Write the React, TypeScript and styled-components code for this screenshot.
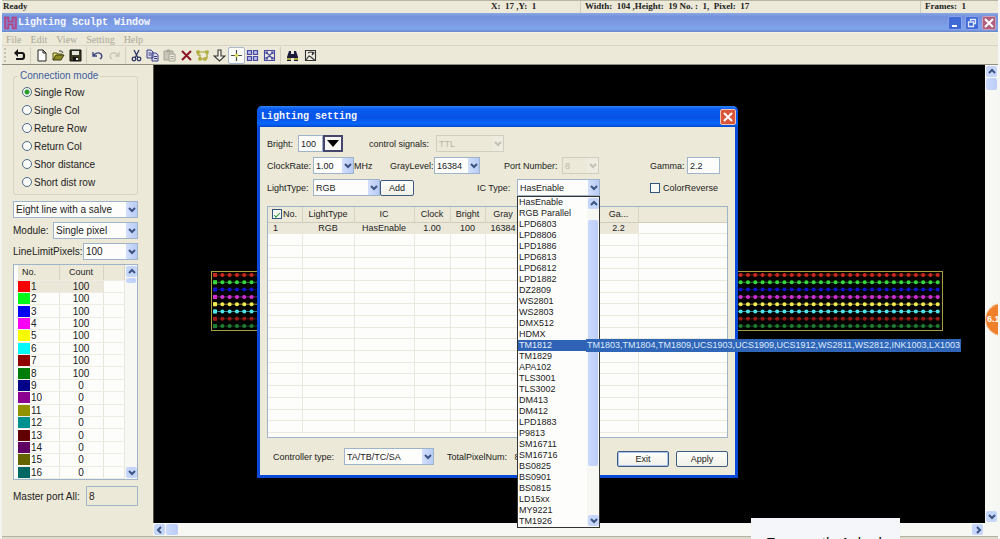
import React from 'react';
import styled, { createGlobalStyle } from 'styled-components';

const sans = '"Liberation Sans", Arial, sans-serif';
const serif = '"Liberation Serif", "Times New Roman", serif';
const mono = '"Liberation Mono", "Courier New", monospace';
const face = '#ece9d8';
const edge = '#9fb4c8';

const GlobalStyle = createGlobalStyle`
  *, *::before, *::after { box-sizing: border-box; }
  html, body, #root { height: 100%; margin: 0; }
  body { background: #f6f6f4; font-family: ${sans}; font-size: 10px; color: #222; overflow: hidden; }
  button, input, select { font: inherit; color: inherit; margin: 0; }
`;

const Window = styled.div`
  position: relative;
  display: flex;
  flex-direction: column;
  height: 100%;
  min-height: 539px;
  margin-right: 2px;
  background: ${face};
  border-left: 2px solid #f4f4f0;
  overflow: hidden;
`;

/* Status strip */
const StatusBar = styled.div`
  display: grid;
  grid-template-columns: 1fr 90px 340px 78px;
  height: 13px;
  line-height: 11px;
  border-top: 1px solid #b9b6a4;
  font-family: ${serif};
  font-size: 9px;
  font-weight: bold;
  white-space: pre;
`;
const StatusCell = styled.span<{ $divided?: boolean }>`
  padding-left: ${p => (p.$divided ? 4 : 1)}px;
  border-left: ${p => (p.$divided ? '1px solid #d0cdbc' : 'none')};
`;

/* Title bars */
const TitleBar = styled.header`
  display: flex;
  align-items: center;
  height: 19px;
  padding: 0 2px;
  background: linear-gradient(#8aa9e4 0, #7490dc 20%, #7b98e2 45%, #7fa5ec 85%, #6a84c8 100%);
`;
const TitleText = styled.h1`
  flex: 1;
  margin: 0;
  font-family: ${mono};
  font-size: 10px;
  font-weight: bold;
  color: #f4f7ff;
`;
const CaptionButton = styled.button<{ $close?: boolean }>`
  display: grid;
  place-items: center;
  width: 14px;
  height: 14px;
  margin-left: 3px;
  padding: 0;
  border: 1px solid ${p => (p.$close ? '#c9a0b8' : '#88a2ea')};
  border-radius: 2px;
  background: ${p => (p.$close ? '#b0607c' : '#3f69d6')};
`;

/* Menu and toolbar */
const MenuBar = styled.nav`
  display: flex;
  gap: 9px;
  height: 14px;
  padding-left: 4px;
  border-top: 1px solid #f6f4ea;
  border-bottom: 1px solid #d8d5c6;
  font-family: ${serif};
  font-size: 10px;
  line-height: 13px;
`;
const MenuLink = styled.a`
  color: #aaa896;
  text-decoration: none;
`;
const Toolbar = styled.div`
  display: flex;
  align-items: center;
  height: 19px;
  padding-left: 2px;
  border-bottom: 1px solid #8f8d80;
`;
const Grip = styled.span`
  width: 6px;
  height: 14px;
  border-left: 2px dotted #c4c1b0;
`;
const ToolGroup = styled.div<{ $width: number }>`
  display: grid;
  grid-auto-flow: column;
  grid-auto-columns: 1fr;
  width: ${p => p.$width}px;
  height: 17px;
  margin-right: 2px;
  padding-right: 2px;
  border-right: 1px solid #d2cfbe;
  &:last-child { border-right: none; }
`;
const ToolButton = styled.button<{ $on?: boolean }>`
  display: grid;
  place-items: center;
  min-width: 0;
  padding: 0;
  border: 1px solid ${p => (p.$on ? '#aab6cc' : 'transparent')};
  border-radius: 2px;
  background: ${p => (p.$on ? '#fcfcfa' : 'transparent')};
`;

/* Workspace */
const Workspace = styled.main`
  display: flex;
  flex: 1;
  min-height: 0;
`;
const SidePanel = styled.aside`
  display: flex;
  flex-direction: column;
  width: 151px;
  padding: 5px 15px 0 11px;
`;
const Group = styled.fieldset`
  margin: 0 0 6px;
  padding: 1px 8px 3px;
  border: 1px solid #d6d4c2;
  border-radius: 3px;
`;
const GroupTitle = styled.legend`
  margin-left: -4px;
  padding: 0 2px;
  line-height: 12px;
  color: #3c5ea0;
`;
const RadioLabel = styled.label`
  display: flex;
  align-items: center;
  gap: 2px;
  height: 18px;
`;
const Radio = styled.input`
  appearance: none;
  width: 10px;
  height: 10px;
  border: 1px solid #4b6a86;
  border-radius: 50%;
  background: #fbfbf9;
  &:checked { background: radial-gradient(circle, #2c9c2c 0 2px, #f4f8f2 3px); }
`;
const SideRow = styled.div`
  display: flex;
  align-items: center;
  justify-content: space-between;
  margin-bottom: 4px;
  white-space: nowrap;
`;

/* Form controls */
const ComboFrame = styled.span<{ $width?: number; $disabled?: boolean }>`
  display: grid;
  align-items: center;
  flex: none;
  width: ${p => (p.$width ? p.$width + 'px' : '100%')};
  height: 17px;
  border: 1px solid ${p => (p.$disabled ? '#d0cebf' : edge)};
  background: ${p => (p.$disabled ? face : '#fdfdfb')};
  color: ${p => (p.$disabled ? '#b9b7a6' : '#222')};
`;
const ComboSelect = styled.select`
  grid-area: 1 / 1;
  appearance: none;
  width: 100%;
  height: 15px;
  padding: 0 0 0 2px;
  border: none;
  background: transparent;
  opacity: 1;
`;
const ArrowBox = styled.span<{ $disabled?: boolean }>`
  grid-area: 1 / 1;
  justify-self: end;
  display: grid;
  place-items: center;
  width: 11px;
  height: 15px;
  background: ${p => (p.$disabled ? '#eeece0' : 'linear-gradient(90deg, #d3dffc, #b8cbf6)')};
  pointer-events: none;
`;
const TextInput = styled.input<{ $width: number }>`
  width: ${p => p.$width}px;
  height: 17px;
  padding: 0 2px;
  border: 1px solid ${edge};
  background: #fdfdfb;
`;
const PortInput = styled(TextInput)`
  height: 20px;
  background: ${face};
  line-height: 16px;
`;
const PushButton = styled.button<{ $width: number; $default?: boolean }>`
  width: ${p => p.$width}px;
  height: 16px;
  padding: 0;
  border: 1px solid #3d5c80;
  border-radius: 2px;
  background: linear-gradient(#fefefc, #f1f0e8);
  box-shadow: ${p => (p.$default ? 'inset 0 0 0 1px #a9c2ee' : 'none')};
`;

/* Port list */
const PortList = styled.div`
  display: flex;
  height: 216px;
  margin-bottom: 6px;
  border: 1px solid ${edge};
  background: #fdfdfb;
`;
const PortTable = styled.table`
  flex: 1;
  height: 214px;
  margin-left: 4px;
  border-collapse: collapse;
  table-layout: fixed;
  line-height: 11px;
  th, td { padding: 0; border-right: 1px solid #e8e6da; border-bottom: 1px solid #efede3; }
  th { height: 15px; background: ${face}; font-size: 9px; font-weight: normal; border-right-color: #d6d3c3; }
  th:first-child { padding-left: 4px; text-align: left; }
  td:nth-child(2), th:nth-child(2) { text-align: center; }
`;
const PortRow = styled.tr<{ $selected?: boolean }>`
  td:nth-child(-n + 2) { background: ${p => (p.$selected ? '#ebe8d9' : 'transparent')}; }
`;
const PortCell = styled.div`
  display: flex;
  gap: 1px;
`;
const Swatch = styled.span<{ $color: string }>`
  width: 12px;
  height: 11px;
  background: ${p => p.$color};
`;

/* Scroll bars */
const ScrollTrack = styled.div<{ $horizontal?: boolean; $size: number }>`
  display: flex;
  flex: none;
  flex-direction: ${p => (p.$horizontal ? 'row' : 'column')};
  width: ${p => (p.$horizontal ? 'auto' : p.$size + 'px')};
  height: ${p => (p.$horizontal ? p.$size + 'px' : 'auto')};
  padding: 1px;
  gap: 1px;
  background: #f7f7f3;
`;
const ScrollButton = styled.button`
  display: grid;
  place-items: center;
  flex: none;
  width: 11px;
  height: 11px;
  padding: 0;
  border: none;
  border-radius: 2px;
  background: #c6d6fa;
`;
const ScrollThumb = styled.span<{ $length?: number; $horizontal?: boolean }>`
  flex: none;
  width: ${p => (p.$horizontal ? p.$length + 'px' : 'auto')};
  height: ${p => (p.$horizontal ? 'auto' : p.$length + 'px')};
  border-radius: 2px;
  background: linear-gradient(90deg, #cad9fc, #bccdf6);
`;
const Spacer = styled.span<{ $grow?: number }>`
  flex: ${p => p.$grow || 1};
`;
const Corner = styled.span`
  width: 13px;
`;

const CanvasColumn = styled.div`
  display: flex;
  flex: 1;
  flex-direction: column;
  min-width: 0;
`;
const CanvasRow = styled.div`
  display: flex;
  flex: 1;
  min-height: 0;
`;
const Canvas = styled.div`
  position: relative;
  flex: 1;
  background: #000;
  border-left: 1px solid #55544c;
`;
const Strip = styled.svg`
  position: absolute;
  left: 57px;
  top: 206px;
`;
const BottomEdge = styled.div`
  height: 3px;
  border-top: 1px solid #b5b3a4;
  background: #dddacb;
`;

/* Dialog */
const Dialog = styled.section`
  position: absolute;
  left: 103px;
  top: 41px;
  width: 481px;
  border: 3px solid #0a48d8;
  border-top: none;
  border-radius: 6px 6px 0 0;
  background: ${face};
  font-size: 9px;
`;
const DialogTitle = styled.header`
  display: flex;
  align-items: center;
  height: 21px;
  margin: 0 -3px;
  padding: 0 4px;
  border-radius: 5px 5px 0 0;
  background: linear-gradient(#2f82f8 0, #0a5cf0 15%, #0652e4 55%, #0466fa 85%, #0348c8 100%);
`;
const DialogClose = styled(CaptionButton)`
  width: 16px;
  height: 16px;
  margin-right: -2px;
  border-color: #f0c4b4;
  background: #d8563a;
`;
const DialogBody = styled.div`
  padding: 8px 7px 0;
`;
const FormRow = styled.div<{ $columns: string }>`
  display: grid;
  grid-template-columns: ${p => p.$columns};
  height: 17px;
  margin-bottom: 5px;
  white-space: nowrap;
`;
const Field = styled.div`
  display: flex;
  align-items: center;
  min-width: 0;
`;
const FieldLabel = styled.label<{ $width?: number }>`
  flex: none;
  width: ${p => (p.$width ? p.$width + 'px' : 'auto')};
`;
const BrightButton = styled.button`
  display: grid;
  place-items: center;
  width: 20px;
  height: 17px;
  padding: 0;
  border: 2px solid #45456e;
  background: #f6f6f4;
`;
const CheckLabel = styled.label`
  display: flex;
  align-items: center;
  gap: 3px;
`;
const HeaderCheck = styled(CheckLabel)`
  gap: 1px;
  padding-left: 4px;
`;
const CheckBox = styled.input`
  appearance: none;
  display: grid;
  place-items: center;
  width: 10px;
  height: 10px;
  border: 1px solid #2f5580;
  background: #f8f8f5;
  &:checked::before {
    content: '';
    width: 6px;
    height: 3px;
    border: solid #2a9a38;
    border-width: 0 0 1px 1px;
    transform: rotate(-45deg);
  }
`;
const LightFrame = styled.div`
  height: 232px;
  margin-top: 10px;
  border: 1px solid ${edge};
  background: #fdfdfb;
`;
const LightTable = styled.table`
  width: 100%;
  height: 226px;
  border-collapse: collapse;
  table-layout: fixed;
  white-space: nowrap;
  line-height: 10px;
  th, td { height: 11px; padding: 0; text-align: center; border-right: 1px solid #ebe9de; border-bottom: 1px solid #ebe9de; }
  th { height: 15px; background: ${face}; font-weight: normal; border-right-color: #d6d3c3; border-bottom-color: #d0cdbc; }
  th:last-child, td:last-child { border-right: none; }
  td:first-child { text-align: left; padding-left: 5px; }
`;
const LightRow = styled.tr<{ $selected?: boolean }>`
  td:not(:last-child) { background: ${p => (p.$selected ? '#ebe8d9' : 'transparent')}; }
`;
const DialogFooter = styled.footer`
  display: flex;
  align-items: center;
  height: 37px;
  padding-left: 6px;
  white-space: nowrap;
`;
const TotalText = styled.span`
  flex: 1;
  padding-left: 13px;
`;
const Buttons = styled.div`
  display: flex;
  gap: 7px;
  margin-top: 5px;
`;

/* Open drop-down list and its hint */
const Popup = styled.div`
  position: absolute;
  left: 257px;
  top: 90px;
  display: flex;
  width: 83px;
  border: 1px solid #333;
  background: #fdfdfb;
`;
const Options = styled.ul`
  flex: 1;
  min-width: 0;
  margin: 0;
  padding: 0;
  list-style: none;
`;
const Option = styled.li<{ $active?: boolean }>`
  height: 11px;
  padding-left: 1px;
  line-height: 11px;
  background: ${p => (p.$active ? '#2f62b4' : 'transparent')};
  color: ${p => (p.$active ? '#e6eefc' : '#222')};
  white-space: nowrap;
`;
const Hint = styled.div`
  position: absolute;
  left: 68px;
  top: 142px;
  height: 13px;
  padding: 0 1px;
  line-height: 13px;
  background: #2f66b8;
  color: #dfe9fb;
  white-space: nowrap;
`;

/* Overlays at the window's edge */
const Bubble = styled.div`
  position: absolute;
  right: -20px;
  top: 303px;
  width: 33px;
  height: 33px;
  padding-left: 1px;
  border: 1px solid #f3c7a0;
  border-radius: 50%;
  background: #f0812c;
  color: #fff;
  font-size: 9px;
  font-weight: bold;
  line-height: 31px;
`;
const Toast = styled.div`
  position: absolute;
  right: 98px;
  bottom: 0;
  width: 149px;
  height: 21px;
  padding: 15px 0 0 15px;
  overflow: hidden;
  background: #f5f6f9;
  color: #111;
  font-size: 15px;
  line-height: 20px;
  white-space: nowrap;
`;

const chevrons = {
  down: 'M1 2l3 3 3-3',
  up: 'M1 5l3-3 3 3',
  left: 'M5 1L2 4l3 3',
  right: 'M3 1l3 3-3 3',
};

function Chevron({ dir = 'down', color = '#3c5482' }: { dir?: keyof typeof chevrons; color?: string }) {
  return (
    <svg width="8" height="8" viewBox="0 0 8 8" fill="none" stroke={color} strokeWidth="2">
      <path d={chevrons[dir]} />
    </svg>
  );
}

type ComboProps = { id: string; value: string; width?: number; disabled?: boolean };

function Combo({ id, value, width, disabled }: ComboProps) {
  return (
    <ComboFrame $width={width} $disabled={disabled}>
      <ComboSelect id={id} aria-label={id} disabled={disabled} defaultValue={value}>
        <option>{value}</option>
      </ComboSelect>
      <ArrowBox $disabled={disabled}>
        <Chevron color={disabled ? '#c4c2b4' : undefined} />
      </ArrowBox>
    </ComboFrame>
  );
}

const icons: Record<string, React.ReactNode> = {
  back: (
    <>
      <path d="M4 4h5q2 0 2 2.500v1q0 2.500-2 2.500H3" fill="none" stroke="#161616" strokeWidth="2.200" />
      <path d="M5 0v8L1 4z" fill="#161616" />
    </>
  ),
  create: <path d="M3 1h5l3 3v8H3zM8 1v3h3" fill="#fff" stroke="#222" />,
  open: (
    <>
      <path d="M1 11V4h4l1 1h4v2" fill="#e4df6a" stroke="#55551a" />
      <path d="M1 11l3-5h8l-3 5z" fill="#8d8d25" stroke="#3a3a10" />
      <path d="M7 2q3-1 4 2" fill="none" stroke="#333" />
    </>
  ),
  save: (
    <>
      <path d="M1 1h11v11H1z" fill="#3c3c20" stroke="#111" />
      <path d="M3 2h7v4H3z" fill="#e4e4dc" />
      <path d="M4 8h5v4H4z" fill="#111" />
      <path d="M7 9h2v2H7z" fill="#eee" />
    </>
  ),
  undo: <path d="M2 3v4h4M2 7q4-5 8-2 2 3-1 5" fill="none" stroke="#3a4484" strokeWidth="1.4" />,
  redo: <path d="M11 3v4H7M11 7Q7 2 3 5q-2 3 1 5" fill="none" stroke="#c6c4b6" strokeWidth="1.3" />,
  cut: (
    <g fill="none" stroke="#2f3566" strokeWidth="1.3">
      <path d="M4 1l4 8M9 1L5 9" />
      <circle cx="4" cy="10" r="1.8" />
      <circle cx="9" cy="10" r="1.8" />
    </g>
  ),
  copy: (
    <g fill="#dcdcf0" stroke="#3d4084">
      <path d="M1 1h4l2 2v6H1zM6 4h4l2 2v6H6z" />
      <path d="M2.5 4h3M2.5 6h3M8 7.500h3M8 9.500h3" />
    </g>
  ),
  paste: (
    <g fill="#c9c7b9" stroke="#a4a294">
      <path d="M1 2h9v9H1zM4 1h3v2H4z" />
      <path d="M6 5h6v7H6z" fill="#e8e6da" />
      <path d="M7.500 7.500h3M7.500 9.500h3" />
    </g>
  ),
  remove: <path d="M2 2l9 9M11 2l-9 9" stroke="#8c1424" strokeWidth="2" />,
  loop: (
    <g fill="none" stroke="#a4a024" strokeWidth="1.2">
      <path d="M3 3h7M11 4v5H9M8 10H5M4 9V6H2V4" />
      <path d="M1 2h2v2H1zM10 2h2v2h-2zM3 9h2v2H3zM8 9h2v2H8z" fill="#f0ee80" />
    </g>
  ),
  drop: <path d="M5 1h3v6h4l-5.500 5L1 7h4z" fill="#f4f2e6" stroke="#333" strokeWidth="1.1" />,
  cross: (
    <>
      <path d="M6.500 1v11M1 6.500h11" stroke="#4c4c42" strokeWidth="1.2" />
      <path d="M6.500 4.500l2 2-2 2-2-2z" fill="#d8dc48" />
    </>
  ),
  grid: (
    <g fill="#b5b7e4" stroke="#4549a4" strokeWidth="1.2">
      <path d="M1.500 1.500h4v4h-4zM7.500 1.500h4v4h-4zM1.500 7.500h4v4h-4zM7.500 7.500h4v4h-4z" />
    </g>
  ),
  expand: (
    <g fill="none" stroke="#4549a4" strokeWidth="1.1">
      <path d="M1.500 1.500h10v10h-10z" />
      <path d="M3 3l7 7M10 3l-7 7M3 5V3h2M8 3h2v2M10 8v2H8M5 10H3V8" />
    </g>
  ),
  find: (
    <>
      <path d="M3 2h2v3h3V2h2l2 6v4H8V9H5v3H1V8z" fill="#1b1b3c" />
      <path d="M1 9h4v2H1zM8 9h4v2H8z" fill="#a8a838" />
    </>
  ),
  image: (
    <g fill="#efede2" stroke="#333" strokeWidth="1.1">
      <path d="M1.500 1.500h10v10h-10z" />
      <path d="M2 11l3-4 2 1 4 3.500M4 4q3-2 5 0l-1 2M8 3l2 1-2 2" fill="none" />
    </g>
  ),
};

const toolGroups: { width: number; tools: string[] }[] = [
  { width: 21, tools: ['back'] },
  { width: 54, tools: ['create', 'open', 'save'] },
  { width: 37, tools: ['undo', 'redo'] },
  { width: 153, tools: ['cut', 'copy', 'paste', 'remove', 'loop', 'drop', 'cross', 'grid', 'expand'] },
  { width: 38, tools: ['find', 'image'] },
];

const modes = ['Single Row', 'Single Col', 'Reture Row', 'Return Col', 'Shor distance', 'Short dist row'];
const portColors = [
  '#f80000', '#00f818', '#0000f4', '#f800f4', '#fbfb00', '#00f8f8', '#900000', '#007c08',
  '#000088', '#8c0090', '#929200', '#009090', '#600000', '#600064', '#646400', '#006864',
];
const stripColors = ['#c8281e', '#38d83c', '#1414c8', '#d030d0', '#f0ec50', '#4ce4e8', '#981c18', '#207c30'];

const chips = [
  'HasEnable', 'RGB Parallel', 'LPD6803', 'LPD8806', 'LPD1886', 'LPD6813', 'LPD6812', 'LPD1882', 'DZ2809',
  'WS2801', 'WS2803', 'DMX512', 'HDMX', 'TM1812', 'TM1829', 'APA102', 'TLS3001', 'TLS3002', 'DM413', 'DM412',
  'LPD1883', 'P9813', 'SM16711', 'SM16716', 'BS0825', 'BS0901', 'BS0815', 'LD15xx', 'MY9221', 'TM1926',
];

const lightColumns = [34, 52, 60, 36, 35, 36, 78, 39];
const lightValues = ['1', 'RGB', 'HasEnable', '1.00', '100', '16384', '', '2.2', ''];

function LightStrip() {
  return (
    <Strip width="732" height="60" viewBox="0 0 732 60">
      <rect x="0.5" y="0.5" width="731" height="59" fill="none" stroke="#a8a040" />
      {stripColors.map((color, row) => (
        <g key={color} fill={color} stroke={color}>
          <path d={`M3 ${4 + row * 7.3}H728`} opacity="0.6" />
          <path d={`M4 ${4 + row * 7.3}H728`} strokeWidth="4" strokeLinecap="round" strokeDasharray="0.1 7.2" />
          <rect x="2" y={2 + row * 7.3} width="4" height="4" stroke="none" />
        </g>
      ))}
    </Strip>
  );
}

function ChipPopup() {
  return (
    <Popup>
      <Options role="listbox" aria-label="IC Type">
        {chips.map(chip => (
          <Option key={chip} role="option" aria-selected={chip === 'TM1812'} $active={chip === 'TM1812'}>
            {chip}
          </Option>
        ))}
      </Options>
      <ScrollTrack $size={12}>
        <ScrollButton aria-label="Scroll up"><Chevron dir="up" /></ScrollButton>
        <Spacer />
        <ScrollThumb $length={246} />
        <Spacer $grow={5} />
        <ScrollButton aria-label="Scroll down"><Chevron /></ScrollButton>
      </ScrollTrack>
      <Hint role="tooltip">TM1803,TM1804,TM1809,UCS1903,UCS1909,UCS1912,WS2811,WS2812,INK1003,LX1003</Hint>
    </Popup>
  );
}

function LightingDialog() {
  return (
    <Dialog role="dialog" aria-label="Lighting setting">
      <DialogTitle>
        <TitleText as="h2">Lighting setting</TitleText>
        <DialogClose $close aria-label="Close dialog">
          <svg width="10" height="10" viewBox="0 0 10 10" stroke="#fff" strokeWidth="2"><path d="M1 1l8 8M9 1L1 9" /></svg>
        </DialogClose>
      </DialogTitle>
      <DialogBody>
        <FormRow $columns="102px 1fr">
          <Field>
            <FieldLabel htmlFor="bright" $width={31}>Bright:</FieldLabel>
            <TextInput id="bright" $width={25} defaultValue="100" />
            <BrightButton aria-label="Choose brightness">
              <svg width="12" height="7" viewBox="0 0 12 7"><path d="M0 0h12L6 7z" /></svg>
            </BrightButton>
          </Field>
          <Field>
            <FieldLabel htmlFor="signals" $width={67}>control signals:</FieldLabel>
            <Combo id="signals" value="TTL" width={68} disabled />
          </Field>
        </FormRow>
        <FormRow $columns="123px 114px 146px 1fr">
          <Field>
            <FieldLabel htmlFor="clock" $width={46}>ClockRate:</FieldLabel>
            <Combo id="clock" value="1.00" width={41} />
            <span>MHz</span>
          </Field>
          <Field>
            <FieldLabel htmlFor="gray" $width={44}>GrayLevel:</FieldLabel>
            <Combo id="gray" value="16384" width={46} />
          </Field>
          <Field>
            <FieldLabel htmlFor="port" $width={58}>Port Number:</FieldLabel>
            <Combo id="port" value="8" width={37} disabled />
          </Field>
          <Field>
            <FieldLabel htmlFor="gamma" $width={37}>Gamma:</FieldLabel>
            <TextInput id="gamma" $width={33} defaultValue="2.2" />
          </Field>
        </FormRow>
        <FormRow $columns="210px 173px 1fr">
          <Field>
            <FieldLabel htmlFor="light" $width={46}>LightType:</FieldLabel>
            <Combo id="light" value="RGB" width={67} />
            <PushButton $width={34}>Add</PushButton>
          </Field>
          <Field>
            <FieldLabel htmlFor="chip" $width={40}>IC Type:</FieldLabel>
            <Combo id="chip" value="HasEnable" width={83} />
          </Field>
          <CheckLabel><CheckBox type="checkbox" />ColorReverse</CheckLabel>
        </FormRow>
        <LightFrame>
          <LightTable>
            <colgroup>
              {lightColumns.map((width, i) => <col key={i} width={width} />)}
              <col />
            </colgroup>
            <thead>
              <tr>
                <th><HeaderCheck><CheckBox type="checkbox" defaultChecked />No.</HeaderCheck></th>
                <th>LightType</th>
                <th>IC</th>
                <th>Clock</th>
                <th>Bright</th>
                <th>Gray</th>
                <th />
                <th>Ga...</th>
                <th />
              </tr>
            </thead>
            <tbody>
              {Array.from({ length: 18 }, (_, row) => (
                <LightRow key={row} $selected={row === 0}>
                  {lightValues.map((value, i) => <td key={i}>{row === 0 ? value : ''}</td>)}
                </LightRow>
              ))}
            </tbody>
          </LightTable>
        </LightFrame>
        <DialogFooter>
          <FieldLabel htmlFor="controller" $width={71}>Controller type:</FieldLabel>
          <Combo id="controller" value="TA/TB/TC/SA" width={90} />
          <TotalText>TotalPixelNum:&nbsp;&nbsp; 8</TotalText>
          <Buttons>
            <PushButton $width={52} $default>Exit</PushButton>
            <PushButton $width={52}>Apply</PushButton>
          </Buttons>
        </DialogFooter>
      </DialogBody>
      <ChipPopup />
    </Dialog>
  );
}

function Side() {
  return (
    <SidePanel>
      <Group>
        <GroupTitle>Connection mode</GroupTitle>
        {modes.map((mode, i) => (
          <RadioLabel key={mode}>
            <Radio type="radio" name="mode" defaultChecked={i === 0} />
            {mode}
          </RadioLabel>
        ))}
      </Group>
      <SideRow>
        <Combo id="wiring" value="Eight line with a salve" />
      </SideRow>
      <SideRow>
        <label htmlFor="module">Module:</label>
        <Combo id="module" value="Single pixel" width={85} />
      </SideRow>
      <SideRow>
        <label htmlFor="limit">LineLimitPixels:</label>
        <Combo id="limit" value="100" width={55} />
      </SideRow>
      <PortList>
        <PortTable>
          <colgroup>
            <col width={41} />
            <col width={44} />
            <col />
          </colgroup>
          <thead>
            <tr><th>No.</th><th>Count</th><th /></tr>
          </thead>
          <tbody>
            {portColors.map((color, i) => (
              <PortRow key={color} $selected={i === 0}>
                <td><PortCell><Swatch $color={color} />{i + 1}</PortCell></td>
                <td>{i < 8 ? 100 : 0}</td>
                <td />
              </PortRow>
            ))}
          </tbody>
        </PortTable>
        <ScrollTrack $size={12}>
          <ScrollButton aria-label="Scroll up"><Chevron dir="up" /></ScrollButton>
          <ScrollThumb $length={5} />
          <Spacer />
          <ScrollButton aria-label="Scroll down"><Chevron /></ScrollButton>
        </ScrollTrack>
      </PortList>
      <SideRow>
        <label htmlFor="master">Master port All:</label>
        <PortInput id="master" $width={52} defaultValue="8" readOnly />
      </SideRow>
    </SidePanel>
  );
}

export default function App() {
  return (
    <Window>
      <GlobalStyle />
      <StatusBar>
        <StatusCell>Ready</StatusCell>
        <StatusCell>X:  17 ,Y:  1</StatusCell>
        <StatusCell $divided>Width:  104 ,Height:  19 No. :  1,  Pixel:  17</StatusCell>
        <StatusCell $divided>Frames:  1</StatusCell>
      </StatusBar>
      <TitleBar>
        <svg width="14" height="14" viewBox="0 0 14 14" fill="none" stroke="#b8407c" strokeWidth="1.5">
          <path d="M1 1.500h3.500v4h4v-4H12v11H8.500v-4h-4v4H1z" fill="#8a78c8" />
        </svg>
        <TitleText>Lighting Sculpt Window</TitleText>
        <CaptionButton aria-label="Minimize">
          <svg width="10" height="10" viewBox="0 0 10 10"><path d="M2 7h5v2H2z" fill="#fff" /></svg>
        </CaptionButton>
        <CaptionButton aria-label="Restore">
          <svg width="10" height="10" viewBox="0 0 10 10" fill="none" stroke="#dfe8ff" strokeWidth="1.300">
            <path d="M3.500 3V1.500h5v4H7M1.500 4h5v4.500h-5z" />
          </svg>
        </CaptionButton>
        <CaptionButton $close aria-label="Close">
          <svg width="10" height="10" viewBox="0 0 10 10" stroke="#fff" strokeWidth="2"><path d="M1 1l8 8M9 1L1 9" /></svg>
        </CaptionButton>
      </TitleBar>
      <MenuBar>
        {['File', 'Edit', 'View', 'Setting', 'Help'].map(item => (
          <MenuLink key={item} href="#">{item}</MenuLink>
        ))}
      </MenuBar>
      <Toolbar role="toolbar">
        <Grip />
        {toolGroups.map(group => (
          <ToolGroup key={group.width} $width={group.width}>
            {group.tools.map(tool => (
              <ToolButton key={tool} aria-label={tool} $on={tool === 'cross'}>
                <svg width="13" height="13" viewBox="0 0 13 13">{icons[tool]}</svg>
              </ToolButton>
            ))}
          </ToolGroup>
        ))}
      </Toolbar>
      <Workspace>
        <Side />
        <CanvasColumn>
          <CanvasRow>
            <Canvas>
              <LightStrip />
              <LightingDialog />
            </Canvas>
            <ScrollTrack $size={13}>
              <ScrollButton aria-label="Scroll up"><Chevron dir="up" /></ScrollButton>
              <ScrollThumb $length={12} />
              <Spacer />
              <ScrollButton aria-label="Scroll down"><Chevron /></ScrollButton>
            </ScrollTrack>
          </CanvasRow>
          <ScrollTrack $horizontal $size={13}>
            <ScrollButton aria-label="Scroll left"><Chevron dir="left" /></ScrollButton>
            <ScrollThumb $horizontal $length={12} />
            <Spacer />
            <ScrollButton aria-label="Scroll right"><Chevron dir="right" /></ScrollButton>
            <Corner />
          </ScrollTrack>
        </CanvasColumn>
      </Workspace>
      <BottomEdge />
      <Bubble>6.1</Bubble>
      <Toast>Frequently Asked</Toast>
    </Window>
  );
}
